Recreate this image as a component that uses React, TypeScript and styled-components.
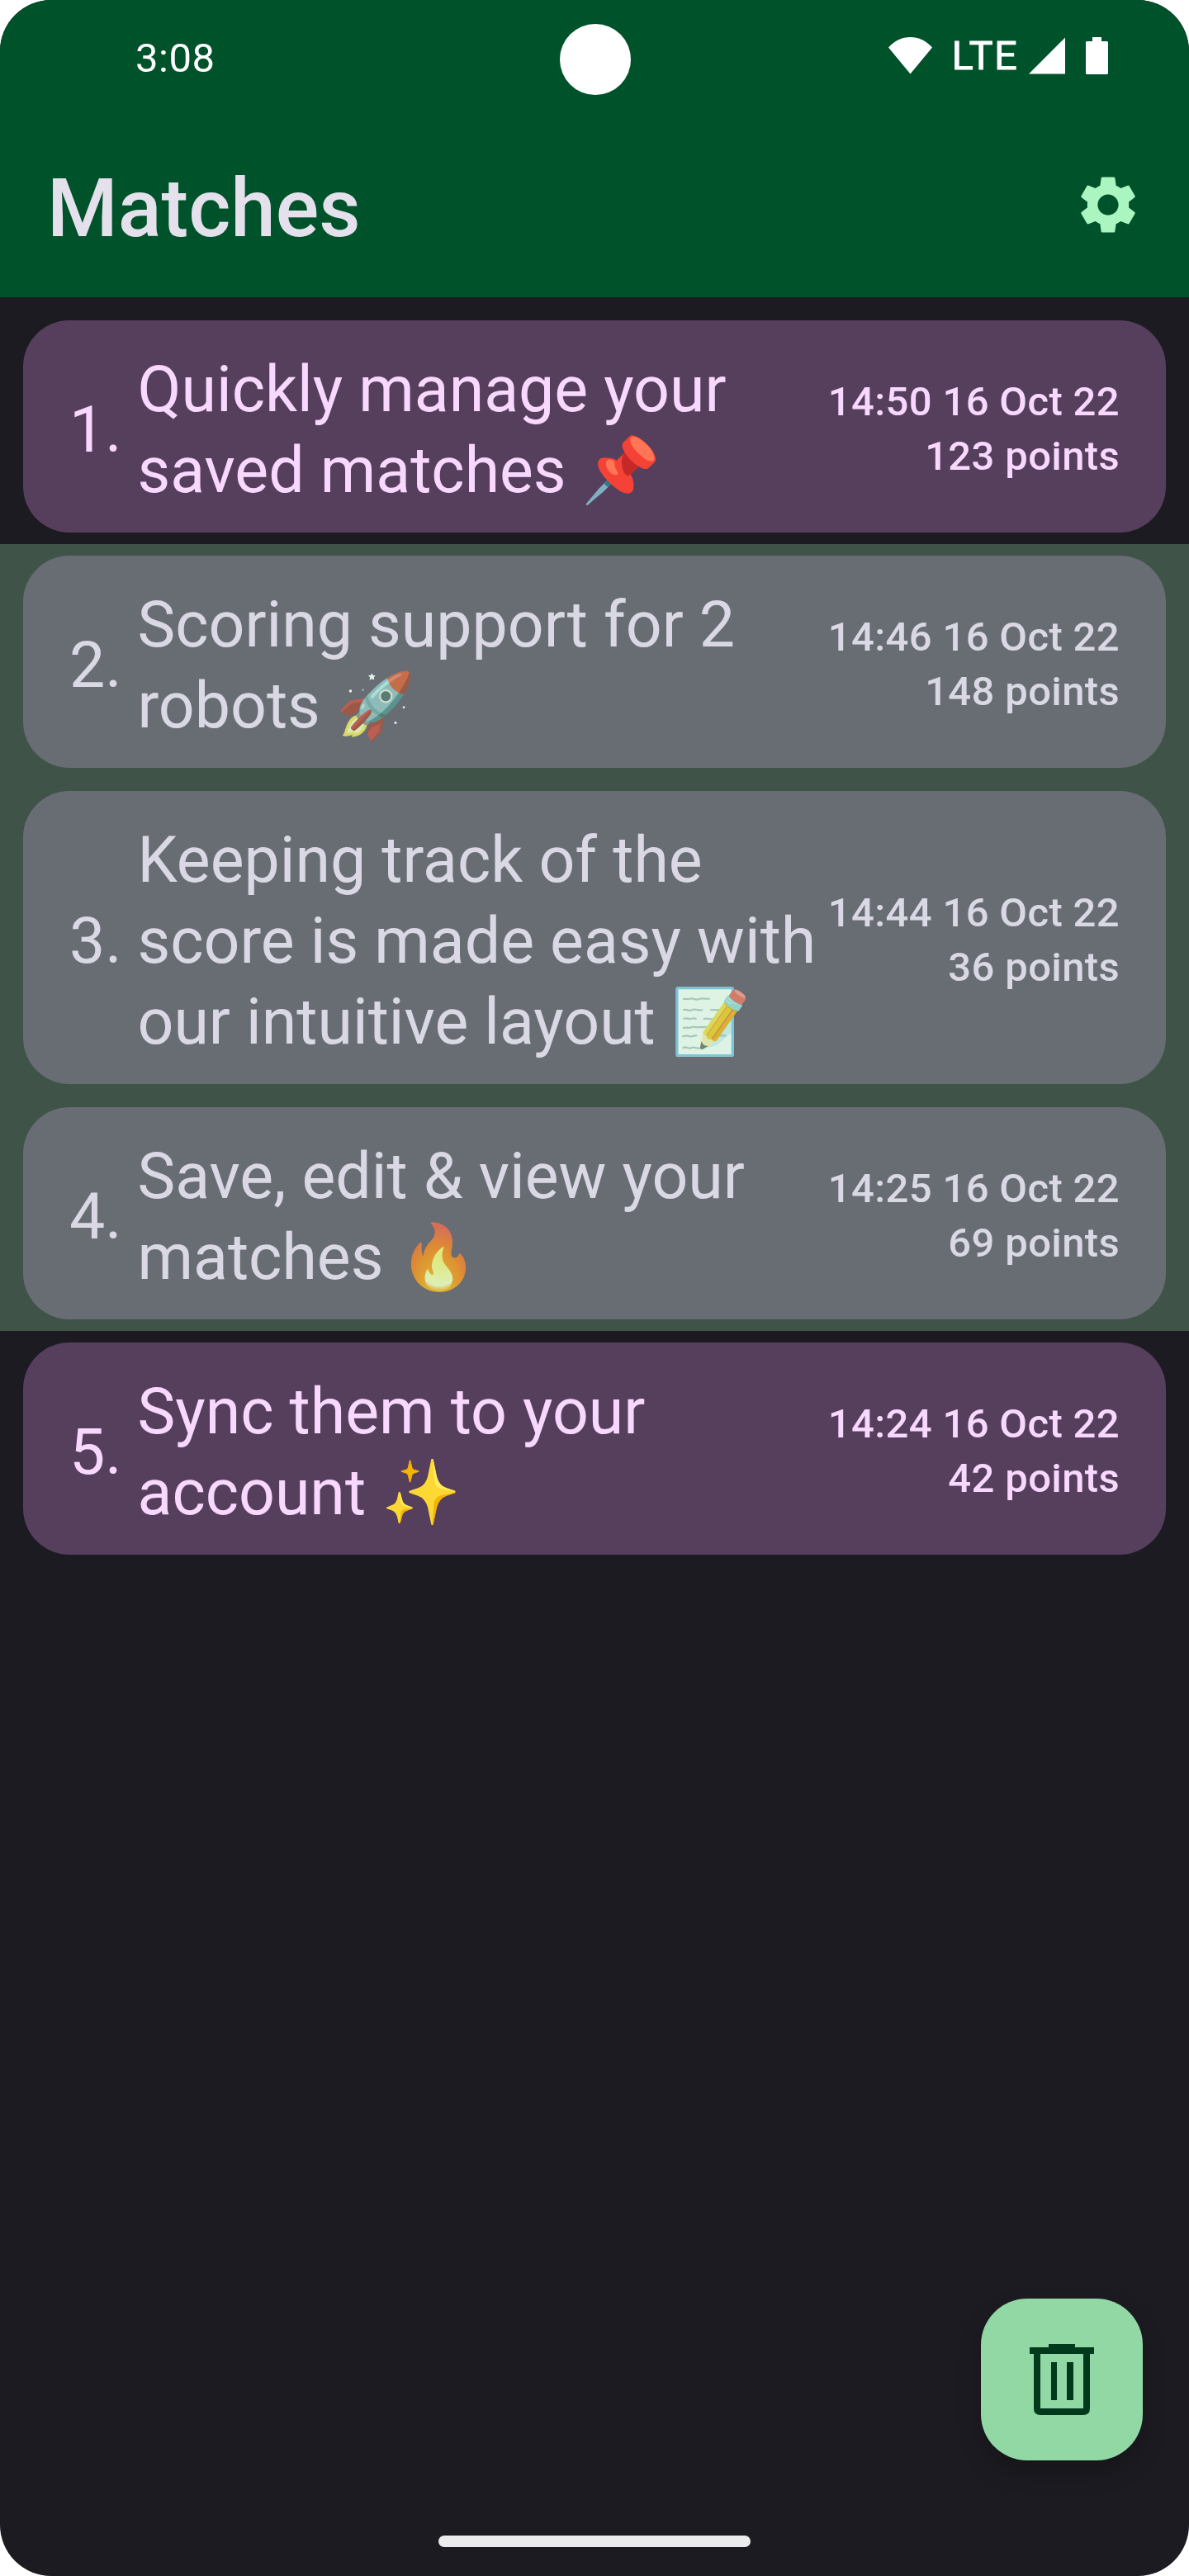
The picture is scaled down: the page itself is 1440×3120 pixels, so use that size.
import React from "react";
import styled, { createGlobalStyle, css } from "styled-components";

const GlobalStyle = createGlobalStyle`
  body { margin: 0; background: #fff; }
  * { box-sizing: border-box; }
`;

const Screen = styled.main`
  position: relative;
  width: 1440px;
  height: 3120px;
  overflow: hidden;
  display: flex;
  flex-direction: column;
  background: #1c1b21;
  border-radius: 62px;
  font-family: Roboto, "Noto Color Emoji", sans-serif;
`;

const Header = styled.header`
  height: 360px;
  background: #00522b;
  display: flex;
  flex-direction: column;
`;

const StatusBar = styled.div`
  height: 144px;
  display: flex;
  justify-content: space-between;
  align-items: center;
  padding: 0 98px 9px 164px;
`;

const Clock = styled.span`
  margin-top: 7px;
  color: #fff;
  font-size: 49px;
  line-height: 58px;
  letter-spacing: 0.5px;
`;

const Camera = styled.span`
  position: absolute;
  left: 678px;
  top: 29px;
  width: 86px;
  height: 86px;
  border-radius: 50%;
  background: #fff;
`;

const StatusIcons = styled.div`
  display: flex;
  align-items: center;
  color: #fff;
`;

const Network = styled.span`
  margin: 0 13px 0 24px;
  font-size: 49px;
  line-height: 58px;
  letter-spacing: 1.2px;
  -webkit-text-stroke: 0.8px #fff;
`;

const BatteryIcon = styled.svg`
  margin-left: 25px;
`;

const AppBar = styled.div`
  flex: 1;
  display: flex;
  align-items: center;
  justify-content: space-between;
  padding: 1px 63px 0 57px;
`;

const Heading = styled.h1`
  margin: 0;
  color: #e4e1ec;
  font-size: 98px;
  line-height: 126px;
  font-weight: 500;
`;

const SettingsIcon = styled.svg`
  margin-bottom: 9px;
`;

const List = styled.section`
  padding-top: 14px;
`;

const Row = styled.div<{ $selected: boolean }>`
  position: relative;
  padding: 14px 28px;
  ${(p) =>
    p.$selected &&
    css`
      &::after {
        content: "";
        position: absolute;
        inset: 0;
        background: rgba(145, 216, 165, 0.3);
      }
    `}
`;

const Card = styled.article`
  display: flex;
  align-items: center;
  padding: 35px 56px 26px;
  border-radius: 56px;
  background: #563f5d;
  color: #f8d8ff;
`;

const Index = styled.span`
  width: 82.5px;
  font-size: 77px;
  line-height: 98px;
`;

const Title = styled.h2`
  flex: 1;
  margin: 0;
  font-size: 77px;
  line-height: 98px;
  font-weight: 400;
  white-space: pre;
`;

const Meta = styled.div`
  padding-bottom: 2px;
  font-size: 49px;
  line-height: 66px;
  font-weight: 500;
  letter-spacing: 0.35px;
  text-align: right;
  white-space: pre;
`;

const Fab = styled.button`
  position: absolute;
  right: 56px;
  bottom: 140px;
  width: 196px;
  height: 196px;
  padding: 0;
  border: 0;
  border-radius: 56px;
  background: #91d8a5;
  display: grid;
  place-items: center;
  box-shadow: 0 14px 28px rgba(0, 0, 0, 0.22);
`;

const HomeIndicator = styled.span`
  position: absolute;
  left: 531px;
  bottom: 35px;
  width: 378px;
  height: 14px;
  border-radius: 7px;
  background: #ececec;
`;

const matches = [
  { title: "Quickly manage your\nsaved matches 📌", time: "14:50 16 Oct 22", points: 123, selected: false },
  { title: "Scoring support for 2\nrobots 🚀", time: "14:46 16 Oct 22", points: 148, selected: true },
  { title: "Keeping track of the\nscore is made easy with\nour intuitive layout 📝", time: "14:44 16 Oct 22", points: 36, selected: true },
  { title: "Save, edit & view your\nmatches 🔥", time: "14:25 16 Oct 22", points: 69, selected: true },
  { title: "Sync them to your\naccount ✨", time: "14:24 16 Oct 22", points: 42, selected: false },
];

export default function App() {
  return (
    <>
      <GlobalStyle />
      <Screen>
        <Header>
          <StatusBar>
            <Clock>3:08</Clock>
            <Camera />
            <StatusIcons>
              <svg width="53" height="45" viewBox="0 0 53 45" fill="currentColor">
                <path d="M0 12.500C7 4.500 16.500 0 26.500 0S46 4.500 53 12.500L26.500 44.500Z" />
              </svg>
              <Network>LTE</Network>
              <svg width="44" height="45" viewBox="0 0 44 45" fill="currentColor">
                <path d="M44 0.500V44.500H0Z" />
              </svg>
              <BatteryIcon width="27" height="45" viewBox="0 0 27 45" fill="currentColor">
                <path d="M8 0H19V5H26L27 6V44L26 45H1L0 44V6L1 5H8Z" />
              </BatteryIcon>
            </StatusIcons>
          </StatusBar>
          <AppBar>
            <Heading>Matches</Heading>
            <SettingsIcon width="70" height="70" viewBox="2 2 20 20" fill="#aaf5c0">
              <path d="M19.140 12.940c.04-.3.06-.61.06-.94 0-.32-.02-.64-.07-.94l2.030-1.580c.18-.14.23-.41.12-.61l-1.920-3.320c-.12-.22-.37-.29-.59-.22l-2.390.96c-.5-.38-1.030-.7-1.620-.94l-.36-2.540c-.04-.24-.24-.41-.48-.41h-3.840c-.24 0-.43.17-.47.41l-.36 2.540c-.59.24-1.130.57-1.620.94l-2.390-.96c-.22-.08-.47 0-.59.22L2.740 8.870c-.12.21-.08.47.12.61l2.030 1.580c-.05.3-.09.63-.09.94s.02.64.07.94l-2.030 1.580c-.18.14-.23.41-.12.61l1.920 3.320c.12.22.37.29.59.22l2.390-.96c.5.38 1.030.7 1.620.94l.36 2.540c.05.24.24.41.48.41h3.840c.24 0 .44-.17.47-.41l.36-2.540c.59-.24 1.130-.56 1.620-.94l2.390.96c.22.08.47 0 .59-.22l1.920-3.320c.12-.22.07-.47-.12-.61zM12 15.600c-1.980 0-3.600-1.620-3.600-3.600s1.620-3.600 3.600-3.600 3.600 1.620 3.600 3.600-1.620 3.600-3.600 3.600z" />
            </SettingsIcon>
          </AppBar>
        </Header>
        <List>
          {matches.map((m, i) => (
            <Row key={m.time} $selected={m.selected}>
              <Card>
                <Index>{i + 1}.</Index>
                <Title>{m.title}</Title>
                <Meta>{`${m.time}\n${m.points} points`}</Meta>
              </Card>
            </Row>
          ))}
        </List>
        <Fab aria-label="Delete">
          <svg width="78" height="86" viewBox="0 0 78 86" fill="#00391c">
            <path d="M23 0H55V4H78V12H73V78Q73 86 65 86H13Q5 86 5 78V12H0V4H23ZM13 12V78H65V12ZM26 22H33V68H26ZM45 22H53V68H45Z" fillRule="evenodd" />
          </svg>
        </Fab>
        <HomeIndicator />
      </Screen>
    </>
  );
}
